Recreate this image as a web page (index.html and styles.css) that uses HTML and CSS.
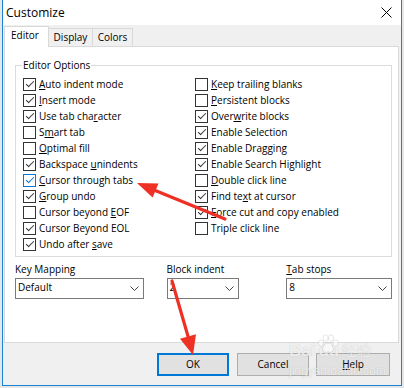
FILE: index.html
```html
<!DOCTYPE html>
<html>
<head>
    <meta charset="UTF-8">
    <title>Customize</title>
    <link rel="stylesheet" href="styles.css">
</head>
<body>
    <div class="window">
        <div class="titlebar">
            <span class="title">Customize</span>
            <svg class="close" width="11" height="11" viewBox="0 0 11 11">
                <path d="M0.5 0.5 L10.5 10.5 M10.5 0.5 L0.5 10.5" stroke="#000" stroke-width="1"/>
            </svg>
        </div>

        <div class="dialog">
            <div class="tabs">
                <div class="tab active">Editor</div>
                <div class="tab display">Display</div>
                <div class="tab colors">Colors</div>
            </div>

            <div class="panel">
                <fieldset class="group">
                    <legend>Editor Options</legend>
                    <div class="options">
                        <div class="col">
                            <div class="opt"><span class="box checked"></span><span><u>A</u>uto indent mode</span></div>
                            <div class="opt"><span class="box checked"></span><span><u>I</u>nsert mode</span></div>
                            <div class="opt"><span class="box checked"></span><span>Use tab cha<u>r</u>acter</span></div>
                            <div class="opt"><span class="box"></span><span>S<u>m</u>art tab</span></div>
                            <div class="opt"><span class="box"></span><span><u>O</u>ptimal fill</span></div>
                            <div class="opt"><span class="box checked"></span><span>Backspace <u>u</u>nindents</span></div>
                            <div class="opt"><span class="box checked hover"></span><span><u>C</u>ursor through tabs</span></div>
                            <div class="opt"><span class="box checked"></span><span><u>G</u>roup undo</span></div>
                            <div class="opt"><span class="box"></span><span>Cursor beyond <u>E</u>OF</span></div>
                            <div class="opt"><span class="box checked"></span><span>Cursor Beyond EOL</span></div>
                            <div class="opt"><span class="box checked"></span><span>Undo after <u>s</u>ave</span></div>
                        </div>
                        <div class="col">
                            <div class="opt"><span class="box"></span><span><u>K</u>eep trailing blanks</span></div>
                            <div class="opt"><span class="box"></span><span><u>P</u>ersistent blocks</span></div>
                            <div class="opt"><span class="box checked"></span><span>Over<u>w</u>rite blocks</span></div>
                            <div class="opt"><span class="box checked"></span><span>Enable Selection</span></div>
                            <div class="opt"><span class="box checked"></span><span>Enable Dragging</span></div>
                            <div class="opt"><span class="box checked"></span><span>Enable Search Highlight</span></div>
                            <div class="opt"><span class="box"></span><span><u>D</u>ouble click line</span></div>
                            <div class="opt"><span class="box checked"></span><span>Find te<u>x</u>t at cursor</span></div>
                            <div class="opt"><span class="box checked"></span><span><u>F</u>orce cut and copy enabled</span></div>
                            <div class="opt"><span class="box"></span><span>Triple click line</span></div>
                        </div>
                    </div>
                </fieldset>

                <div class="fields">
                    <div class="field key-mapping">
                        <label>Key Mapping</label>
                        <div class="select"><span>Default</span><svg class="chevron" width="9" height="5" viewBox="0 0 9 5"><polyline points="0.5,0.5 4.5,4.5 8.5,0.5" fill="none" stroke="#444" stroke-width="1"/></svg></div>
                    </div>
                    <div class="field block-indent">
                        <label>Block indent</label>
                        <div class="select"><span>2</span><svg class="chevron" width="9" height="5" viewBox="0 0 9 5"><polyline points="0.5,0.5 4.5,4.5 8.5,0.5" fill="none" stroke="#444" stroke-width="1"/></svg></div>
                    </div>
                    <div class="field tab-stops">
                        <label><u>T</u>ab stops</label>
                        <div class="select"><span>8</span><svg class="chevron" width="9" height="5" viewBox="0 0 9 5"><polyline points="0.5,0.5 4.5,4.5 8.5,0.5" fill="none" stroke="#444" stroke-width="1"/></svg></div>
                    </div>
                </div>
            </div>

            <div class="buttons">
                <div class="btn default">OK</div>
                <div class="btn cancel">Cancel</div>
                <div class="btn help"><u>H</u>elp</div>
            </div>
        </div>
    </div>

    <div class="watermark">
        <div class="wm-brand">Bai<span class="wm-du">du</span><span class="wm-cn">经验</span></div>
        <div class="wm-url">jingyan.baidu.com</div>
        <svg class="wm-paw" width="22" height="20" viewBox="0 0 22 20">
            <ellipse cx="4" cy="9" rx="2.6" ry="3.2"/>
            <ellipse cx="8.5" cy="4" rx="2.6" ry="3.2"/>
            <ellipse cx="14" cy="4" rx="2.6" ry="3.2"/>
            <ellipse cx="18.5" cy="9" rx="2.6" ry="3.2"/>
            <path d="M11 9 C7 9 5 14 6 17 C7 19 9 18 11 18 C13 18 15 19 16 17 C17 14 15 9 11 9 Z"/>
        </svg>
    </div>

    <svg class="arrows" width="404" height="388" viewBox="0 0 404 388">
        <line x1="225" y1="219" x2="154" y2="190" stroke="#ee3124" stroke-width="3.2" stroke-linecap="round"/>
        <polygon points="137,183 158.5,183.6 152.6,197.6" fill="#ee3124"/>
        <line x1="172" y1="281" x2="188.5" y2="338" stroke="#ee3124" stroke-width="3.2" stroke-linecap="round"/>
        <polygon points="193,355 196,334.2 180,338.8" fill="#ee3124"/>
    </svg>
</body>
</html>
```

FILE: styles.css
```css
* {
    box-sizing: border-box;
}

body {
    margin: 0;
    padding-left: 2px;
    height: 388px;
    overflow: hidden;
    position: relative;
    background: #e6e6e6;
    font-family: 'Open Sans', 'Noto Sans', sans-serif;
    font-size: 10px;
    color: #000;
}

u {
    text-underline-offset: 1px;
}

.window {
    width: 400px;
    height: 386px;
    border: 1px solid #1883d7;
    border-top: none;
    display: flex;
    flex-direction: column;
}

.titlebar {
    height: 25px;
    background: #fff;
    display: flex;
    align-items: center;
    justify-content: space-between;
    padding: 0 9px 0 3px;
}

.title {
    font-size: 12px;
    line-height: 25px;
}

.close {
    display: block;
}

.dialog {
    flex: 1;
    background: #f0f0f0;
    display: flex;
    flex-direction: column;
    padding-top: 1px;
}

/* tab strip */
.tabs {
    display: flex;
    align-items: flex-end;
    height: 20px;
    margin-left: 1px;
}

.tab {
    height: 18px;
    width: 45px;
    margin-left: -1px;
    border: 1px solid #d9d9d9;
    border-bottom: none;
    background: #f0f0f0;
    line-height: 16px;
    text-align: center;
}

.tab.active {
    height: 21px;
    margin-left: 0;
    margin-bottom: -1px;
    background: #fff;
    position: relative;
    z-index: 1;
    text-align: left;
    padding-left: 6px;
}

.tab.colors {
    width: 41px;
}

.panel {
    flex: 1;
    background: #fff;
    border: 1px solid #d9d9d9;
    margin: 0 2px 0 1px;
    padding: 11px 6px 0 10px;
}

/* group box */
.group {
    margin: 0;
    padding: 4px 6px 4px 7px;
    border: 1px solid #dcdcdc;
}

.group legend {
    padding: 0 1px;
    margin-left: -1px;
    line-height: 14px;
}

.options {
    display: grid;
    grid-template-columns: 172px auto;
}

.opt {
    display: flex;
    height: 16px;
    line-height: 16px;
    white-space: nowrap;
}

.box {
    flex: none;
    width: 13px;
    height: 13px;
    margin: 2px 3px 0 0;
    border: 1px solid #333;
    background: #fff;
    position: relative;
}

.box.checked::after {
    content: "";
    position: absolute;
    left: 2px;
    top: 2px;
    width: 7px;
    height: 3px;
    border-left: 1px solid #333;
    border-bottom: 1px solid #333;
    transform: rotate(-45deg);
}

.box.hover {
    border-color: #0078d7;
}

.box.hover::after {
    border-color: #0078d7;
}

/* drop-down fields */
.fields {
    display: flex;
    margin-top: 4px;
}

.field label {
    display: block;
    line-height: 16px;
}

.key-mapping {
    width: 129px;
}

.block-indent {
    width: 73px;
    margin-left: 23px;
}

.tab-stops {
    width: 106px;
    margin-left: 47px;
}

.select {
    margin-top: 1px;
    height: 21px;
    border: 1px solid #7a7a7a;
    display: flex;
    align-items: center;
    justify-content: space-between;
    padding: 0 4px 2px 2px;
    line-height: 15px;
}

.chevron {
    display: block;
    margin-top: 2px;
}

/* buttons */
.buttons {
    display: flex;
    justify-content: flex-end;
    padding: 10px 11px 9px 0;
}

.btn {
    width: 72px;
    height: 23px;
    border: 1px solid #adadad;
    background: #e1e1e1;
    text-align: center;
    line-height: 21px;
}

.btn.default {
    border: 2px solid #0078d7;
    line-height: 19px;
}

.btn.cancel {
    margin-left: 8px;
}

.btn.help {
    width: 74px;
    margin-left: 7px;
}

/* watermark and annotations */
.watermark {
    position: absolute;
    left: 289px;
    top: 340px;
    color: rgba(255, 255, 255, 0.75);
    text-shadow: 0 0 1px rgba(0, 0, 0, 0.22);
    font-family: 'Liberation Sans', sans-serif;
}

.wm-brand {
    font-size: 17px;
    font-weight: bold;
    line-height: 20px;
    white-space: nowrap;
}

.wm-du {
    margin-left: 3px;
}

.wm-cn {
    font-family: 'Noto Sans CJK SC', sans-serif;
    font-weight: normal;
    font-size: 15px;
    margin-left: 2px;
}

.wm-url {
    font-size: 12px;
    line-height: 14px;
    margin-top: 3px;
}

.wm-paw {
    position: absolute;
    left: 28px;
    top: -6px;
    fill: rgba(255, 255, 255, 0.6);
    stroke: rgba(0, 0, 0, 0.12);
    stroke-width: 0.8;
}

.arrows {
    position: absolute;
    left: 0;
    top: 0;
    pointer-events: none;
}
```
